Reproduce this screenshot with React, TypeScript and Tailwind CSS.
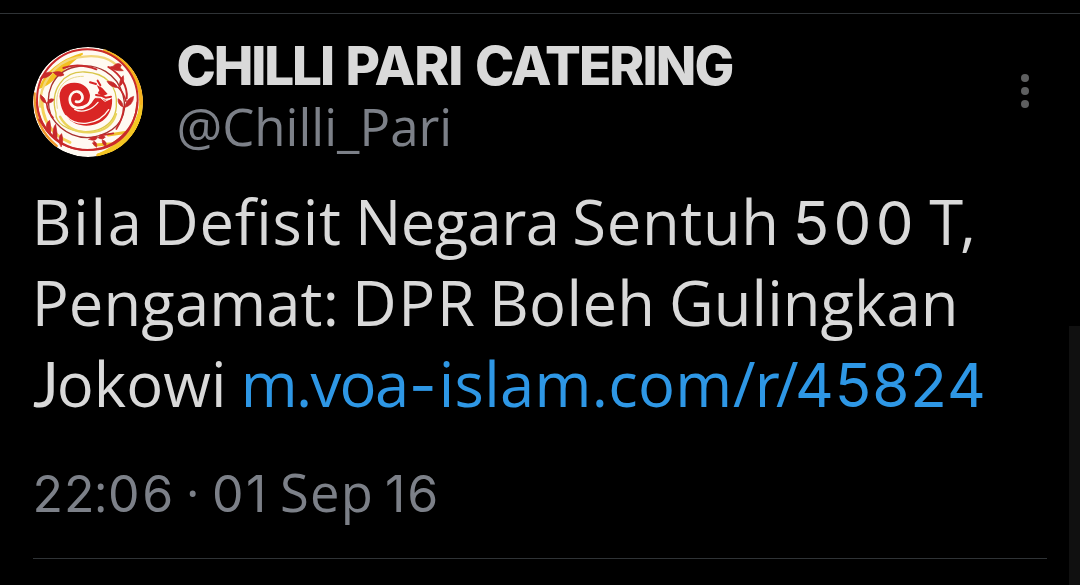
function Avatar() {
  return (
    <svg viewBox="0 0 330 330" className="size-[110px] shrink-0 rounded-full" fill="none" strokeLinecap="round">
      <g transform="translate(-39 -36)">
        <circle cx="204" cy="201" r="165" fill="#fffaf2" />
        <path d="M255 48A163 163 0 0 1 235 361" stroke="#f6b21d" strokeWidth="12" />
        <path d="M362 210C352 270 315 325 232 360C300 350 355 300 366 230Z" fill="#f3c623" stroke="#f3c623" strokeWidth="6" />
        <path d="M44 175C42 230 58 290 110 333" stroke="#ef9a2b" strokeWidth="7" />
        <path d="M60 158C95 150 130 95 188 56C120 75 75 115 60 158Z" fill="#f3c021" stroke="#f3c021" strokeWidth="5" />
        <path d="M60 215C58 150 100 82 170 68S275 72 305 105" stroke="#f3d67a" strokeWidth="7" />
        <path d="M66 190C64 250 92 300 150 322" stroke="#f5d35a" strokeWidth="9" />
        <path d="M265 300L330 290L280 326L225 330" stroke="#f0c22d" strokeWidth="9" />
        <circle cx="202" cy="194" r="151" stroke="#c92a2b" strokeWidth="6" />
        <path d="M50 202C56 282 112 344 202 345S345 290 352 202" stroke="#c92a2b" strokeWidth="5" />
        <path d="M94 245C70 180 96 111 165 96S292 118 309 180S295 284 238 302S126 295 94 245" stroke="#a8322f" strokeWidth="4" />
        <path d="M108 235C88 165 130 108 194 111S294 150 289 215S218 300 160 285S108 235 108 235" stroke="#d9c64a" strokeWidth="4" />
        <path d="M120 245C138 278 172 294 212 292S278 269 288 237" stroke="#ead45c" strokeWidth="7" />
        <path d="M112 220C101 156 140 123 190 124" stroke="#e8d98c" strokeWidth="3" />
        <path d="M130 99C160 88 198 91 229 103M265 96C302 118 324 154 320 190" stroke="#c92a2b" strokeWidth="6" />
        <path d="M120 196C113 162 135 142 164 143C191 143 207 160 210 180C210 190 208 197 204 204C216 202 221 188 234 185C245 190 260 202 276 190C280 232 253 272 199 272C153 272 125 239 120 196Z" fill="#d92524" />
        <path d="M168 200C180 203 190 195 187 183C182 168 165 165 155 177C143 194 151 214 169 218C190 221 209 210 220 188" stroke="#fffaf2" strokeWidth="8" />
        <path d="M164 223C187 236 216 224 234 202" stroke="#fffaf2" strokeWidth="4" />
        <path d="M137 242C168 277 234 273 266 224" stroke="#fffaf2" strokeWidth="4" />
        <path d="M230 150L246 158L263 177L248 184L233 175L238 166Z" fill="#d92524" />
        <path d="M210 142L228 147M233 137L241 151M228 180L243 182L257 188L273 185" stroke="#d92524" strokeWidth="6" />
        <path d="M227 188L241 188L255 199L270 192" stroke="#fffaf2" strokeWidth="3" />
        <g fill="#c92a2b" stroke="#c92a2b" strokeWidth="2">
          <path d="M61 130Q72 106 97 113Q85 130 61 130ZM100 112Q125 105 132 120Q113 130 100 112ZM270 96Q288 88 310 107Q284 110 270 96ZM281 92Q294 80 304 90L300 99Z" />
          <path d="M298 154Q299 129 310 122Q315 145 298 154ZM294 158Q271 158 261 139Q282 136 294 158ZM313 218Q320 190 341 184Q340 211 313 218ZM310 216Q293 211 294 191Q307 196 310 216Z" />
          <path d="M79 205Q59 199 61 179Q76 187 79 205ZM82 204Q86 187 102 193Q97 205 82 204ZM78 285Q78 261 89 256Q95 280 91 300ZM99 303Q98 277 107 268Q113 295 111 317ZM118 324Q115 302 125 296Q132 315 124 335Z" />
          <path d="M207 313Q216 301 232 307Q228 321 207 313ZM234 308Q244 297 256 306Q249 317 234 308ZM222 319Q232 321 230 337L218 326ZM247 315Q263 319 257 333Q245 328 247 315Z" />
        </g>
        <path d="M80 205Q82 230 99 248M311 217Q309 250 289 282M295 157Q311 173 318 199M57 254Q80 290 110 313M239 302L280 295" stroke="#c92a2b" strokeWidth="5" />
      </g>
    </svg>
  );
}

function Dot() {
  return <span className="size-[7.5px] rounded-full bg-[#5e5f60]" />;
}

export default function App() {
  return (
    <div className="relative h-[585px] w-[1080px] overflow-hidden whitespace-nowrap bg-black font-['Open_Sans',sans-serif] font-[450] text-[#d9d9d9]">
      <div className="h-3.5 border-b border-[#2f3336]" />
      <header className="flex h-[167px] pl-[33px] pt-[33px]">
        <Avatar />
        <div className="ml-[33.5px] flex-1">
          <h1 className="-mt-[13px] flex h-16 font-['Inter',sans-serif] text-[53px] font-extrabold leading-[64px]">
            <span className="tracking-[-2.15px]">CHILLI</span>
            <span className="ml-[12.6px] tracking-[-1.04px]">PARI</span>
            <span className="ml-[12.6px] tracking-[-1.88px]">CATERING</span>
          </h1>
          <p className="-mt-[3px] text-[51px] leading-[62px] text-[#7c8088]">@Chilli_Pari</p>
        </div>
        <div className="mr-[51.5px] mt-[27px] flex flex-col gap-[5.5px]">
          <Dot />
          <Dot />
          <Dot />
        </div>
      </header>

      <main className="text-[61.5px] leading-[81px]">
        <p className="flex h-[81px] items-baseline pl-[31.7px]">
          <span className="tracking-[1.74px]">Bila</span>
          <span className="ml-[10.4px] tracking-[0.8px]">Defisit</span>
          <span className="ml-[13.3px] tracking-[-0.57px]">Negara</span>
          <span className="ml-[13px] tracking-[0.68px]">Sentuh</span>
          <span className="ml-[13px] font-['Inter',sans-serif] text-[60px] font-normal tracking-[4.34px]">500</span>
          <span className="ml-[11.4px] tracking-[-3.17px]">T,</span>
        </p>
        <p className="flex h-[81px] items-baseline pl-[31.7px]">
          <span className="tracking-[0.14px]">Pengamat:</span>
          <span className="ml-[13px] tracking-[1.69px]">DPR</span>
          <span className="ml-[12.4px] tracking-[0.38px]">Boleh</span>
          <span className="ml-[13.6px] tracking-[0.08px]">Gulingkan</span>
        </p>
        <p className="flex h-[81px] items-baseline pl-[33px]">
          <span className="font-['Lato',sans-serif] text-[61px] font-normal">J</span>
          <span className="-ml-[2.1px] tracking-[0.08px]">okowi</span>
          <a className="ml-[14.1px] flex items-baseline text-[#2e97e5]">
            <span className="tracking-[-1.63px]">m.voa</span>
            <span className="ml-[1.5px] font-['Inter',sans-serif] text-[60px] font-normal">-</span>
            <span className="ml-[2.1px] tracking-[0.32px]">islam.com</span>
            <span className="ml-[0.4px]">/</span>
            <span className="-ml-[0.9px]">r</span>
            <span className="-ml-[3.8px]">/</span>
            <span className="-ml-[3.6px] font-['Inter',sans-serif] text-[60px] font-normal tracking-[1px]">45824</span>
          </a>
        </p>
      </main>

      <p className="mt-[33px] flex h-[70px] items-baseline pl-[32.5px] text-[51px] leading-[70px] text-[#7c8088]">
        <span className="font-['Inter',sans-serif] text-[50px] font-normal tracking-[1.01px]">22</span>
        <span className="-ml-[1.5px]">:</span>
        <span className="ml-[0.6px] font-['Inter',sans-serif] text-[50px] font-normal tracking-[2.76px]">06</span>
        <span className="ml-[9.9px]">·</span>
        <span className="ml-[12.6px] font-['Inter',sans-serif] text-[50px] font-normal tracking-[2.46px]">01</span>
        <span className="ml-[11.2px] w-[96px] text-[52.5px] tracking-[1.3px]">Sep</span>
        <span className="ml-[9px] font-['Inter',sans-serif] text-[50px] font-normal tracking-[1.96px]">16</span>
      </p>
      <div className="ml-[33px] mt-[31px] w-[1014px] border-t border-[#2f3336]" />

      <div className="absolute bottom-0 right-0 top-[326px] w-[11px] bg-[#101010]" />
    </div>
  );
}
